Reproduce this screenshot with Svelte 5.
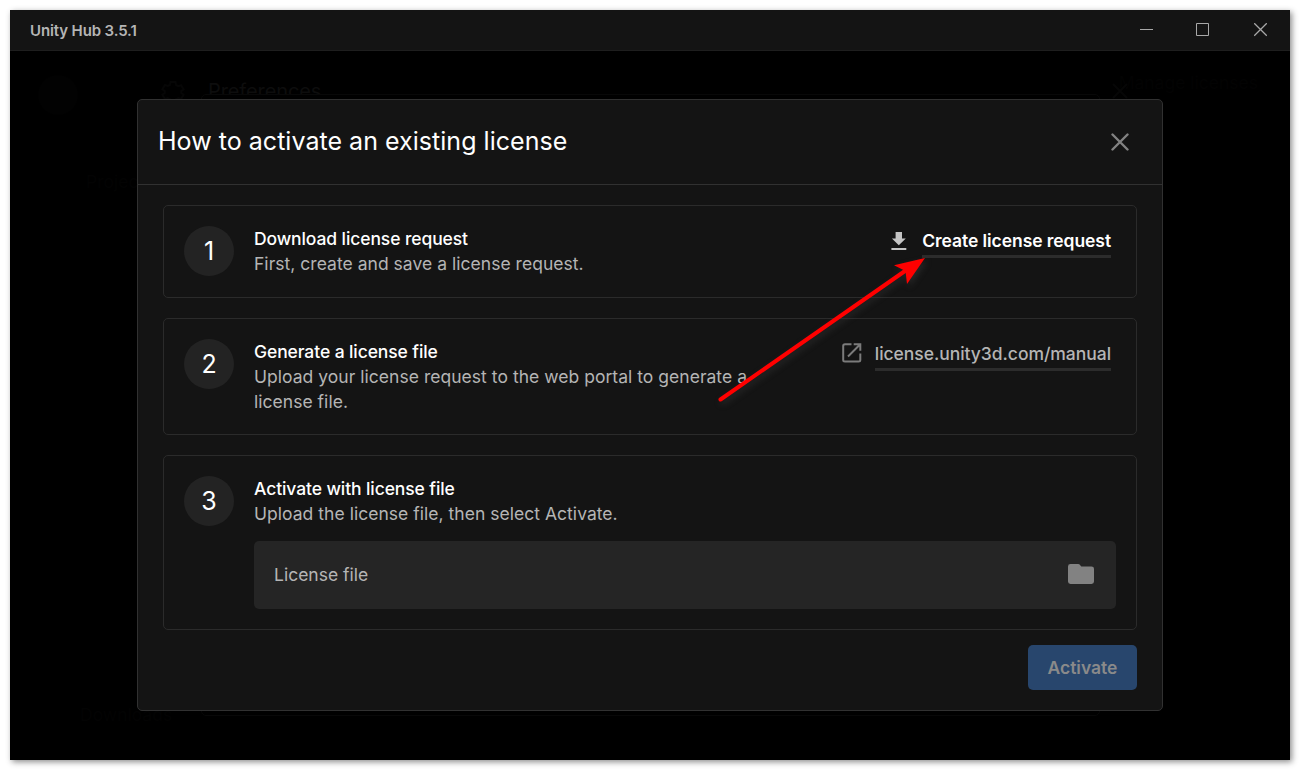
<script lang="ts">
  const version = '3.5.1';

  const steps = [
    {
      title: 'Download license request',
      text: 'First, create and save a license request.',
      link: 'Create license request',
      icon: 'download'
    },
    {
      title: 'Generate a license file',
      text: 'Upload your license request to the web portal to generate a license file.',
      link: 'license.unity3d.com/manual',
      icon: 'external'
    },
    {
      title: 'Activate with license file',
      text: 'Upload the license file, then select Activate.',
      link: '',
      icon: ''
    }
  ];
</script>

<div class="window">
  <header class="titlebar">
    <span class="app-name">Unity Hub {version}</span>
    <div class="window-controls">
      <svg width="13" height="14" viewBox="0 0 13 14"><path d="M0 6.500h13" /></svg>
      <svg width="13" height="14" viewBox="0 0 13 14"><path d="M.5 .5h12v12H.5z" /></svg>
      <svg class="wide" width="13" height="14" viewBox="0 0 13 14"><path d="M.2 .2l12.600 12.600M12.800 .2L.2 12.800" /></svg>
    </div>
  </header>

  <main class="content">
    <!-- dimmed screens under the dialog -->
    <div class="behind">
      <svg class="gear" width="24" height="24" viewBox="0 0 24 24">
        <path d="M9.500 2h5l.6 3 2.200 1.200 2.800-1 2.500 4.200L20.300 11v2l2.300 1.800-2.500 4.200-2.800-1-2.200 1.200-.6 3h-5l-.6-3-2.200-1.200-2.800 1-2.500-4.200L3.700 13v-2L1.400 9.200l2.500-4.200 2.800 1L8.900 5z" />
      </svg>
      <span class="prefs">Preferences</span>
      <span class="manage">Manage licenses</span>
      <span class="projects">Projects</span>
      <span class="downloads">Downloads</span>
      <svg class="prefs-close" width="16" height="16" viewBox="0 0 16 16"><path d="M1 1l14 14M15 1L1 15" /></svg>
      <div class="avatar"></div>
      <div class="behind-dialog"></div>
    </div>

    <section class="dialog">
      <div class="dialog-header">
        <h1>How to activate an existing license</h1>
        <button class="close" aria-label="Close">
          <svg width="18" height="18" viewBox="0 0 18 18"><path d="M1.500 1.500l15 15M16.500 1.500l-15 15" /></svg>
        </button>
      </div>

      <div class="dialog-body">
        {#each steps as step, i}
          <article class="step">
            <div class="number">{i + 1}</div>
            <div class="step-main">
              <div class="step-row">
                <div class="step-text">
                  <h2>{step.title}</h2>
                  <p>{step.text}</p>
                </div>
                {#if step.link}
                  <button class="link" class:primary={step.icon === 'download'}>
                    {#if step.icon === 'download'}
                      <svg width="16" height="19" viewBox="0 0 16 19">
                        <path d="M4.600 0h6.400v6.500h3.800L7.800 13.300.9 6.500h3.700zM.4 16h14.900v2H.4z" />
                      </svg>
                    {:else}
                      <svg width="20" height="20" viewBox="0 0 20 20" class="outline">
                        <path d="M9.500 1.200H3Q1.200 1.200 1.200 3v14q0 1.500 1.800 1.500h13.500q1.800 0 1.800-1.500v-6.500" />
                        <path d="M11.700 1.200h6.600v6.600M18 1.500L6 13.500" />
                      </svg>
                    {/if}
                    <span>{step.link}</span>
                  </button>
                {/if}
              </div>
              {#if i === 2}
                <div class="file-field">
                  <span>License file</span>
                  <svg width="26" height="20" viewBox="0 0 26 20">
                    <path d="M2.500 0h7.800q.8 0 1.300.6L13.300 2.400h10.200Q26 2.400 26 4.800v12.800q0 2.400-2.500 2.400h-21Q0 20 0 17.600V2.400Q0 0 2.500 0z" />
                  </svg>
                </div>
              {/if}
            </div>
          </article>
        {/each}
      </div>

      <div class="dialog-footer">
        <button class="activate">Activate</button>
      </div>
    </section>
  </main>

  <svg class="pointer" width="240" height="170" viewBox="0 0 240 170">
    <path class="shaft" d="M20.500 159.500L210 27.500" />
    <path class="head" d="M225 18L194 25.300L205.500 31L207 44z" />
  </svg>
</div>

<style>
  :global(body) {
    margin: 0;
    background: #fff;
    overflow: hidden;
  }

  .window {
    position: relative;
    box-sizing: border-box;
    display: flex;
    flex-direction: column;
    width: 1280px;
    height: 750px;
    margin: 10px;
    background: #000;
    box-shadow: 2px 2px 6px rgba(0, 0, 0, 0.45);
    font-family: Inter, 'Liberation Sans', sans-serif;
    font-size: 17.5px;
    line-height: 25px;
    color: #b5b5b5;
  }

  h1, h2, p {
    margin: 0;
    font-weight: 400;
  }

  button {
    padding: 0;
    border: 0;
    background: none;
    font: inherit;
    color: inherit;
  }

  svg {
    display: block;
  }

  .titlebar {
    box-sizing: border-box;
    display: flex;
    align-items: center;
    justify-content: space-between;
    height: 41px;
    padding: 0 23px 0 20px;
    background: #141414;
    border-bottom: 1px solid #1e1e1e;
  }

  .app-name {
    font-size: 15px;
    font-weight: 600;
    letter-spacing: -0.13px;
  }

  .window-controls {
    display: flex;
    gap: 43px;
    padding-bottom: 1px;
  }

  .window-controls svg {
    fill: none;
    stroke: #a8a8a8;
    stroke-width: 1;
  }

  .window-controls svg.wide {
    margin-left: 2px;
    stroke-width: 1.3;
  }

  .content {
    position: relative;
    flex: 1;
    padding: 48px 127px 49px;
  }

  .behind {
    position: absolute;
    inset: 0;
    color: #030303;
  }

  .behind > * {
    position: absolute;
  }

  .behind svg {
    fill: none;
    stroke: #060606;
    stroke-width: 2;
  }

  .gear {
    left: 151px;
    top: 29px;
  }

  .prefs {
    left: 198px;
    top: 28px;
    font-size: 20px;
    letter-spacing: -0.1px;
    color: #0d0d0d;
  }

  .manage {
    right: 32px;
    top: 19px;
  }

  .projects {
    left: 76px;
    top: 118px;
  }

  .downloads {
    left: 70px;
    top: 651px;
  }

  .prefs-close {
    left: 1102px;
    top: 32px;
  }

  .avatar {
    left: 28px;
    top: 24px;
    width: 40px;
    height: 40px;
    border-radius: 50%;
    background: #020202;
  }

  .behind-dialog {
    box-sizing: border-box;
    left: 191px;
    top: 43px;
    width: 899px;
    height: 622px;
    border: 1px solid #080808;
    border-radius: 5px;
    background: #000;
  }

  .dialog {
    position: relative;
    box-sizing: border-box;
    height: 612px;
    border: 1px solid #313131;
    border-radius: 5px;
    background: #141414;
  }

  .dialog-header {
    box-sizing: border-box;
    display: flex;
    align-items: center;
    justify-content: space-between;
    height: 85px;
    padding: 0 33px 0 20px;
    border-bottom: 1px solid #313131;
  }

  .dialog-header h1 {
    padding-bottom: 2px;
    font-size: 25px;
    line-height: 34px;
    letter-spacing: 0.03px;
    color: #fff;
  }

  .close svg {
    fill: none;
    stroke: #828282;
    stroke-width: 2.4;
    stroke-linecap: round;
  }

  .dialog-body {
    display: flex;
    flex-direction: column;
    gap: 20px;
    padding: 20px 25px 15px;
  }

  .step {
    box-sizing: border-box;
    display: flex;
    gap: 20px;
    min-height: 93px;
    padding: 20px;
    border: 1px solid #2b2b2b;
    border-radius: 5px;
  }

  .number {
    flex: none;
    width: 50px;
    height: 50px;
    border-radius: 50%;
    background: #232323;
    font-size: 25px;
    line-height: 50px;
    text-align: center;
    color: #fff;
  }

  .step-main {
    flex: 1;
  }

  .step-row {
    display: flex;
    justify-content: space-between;
  }

  .step-text {
    max-width: 510px;
    letter-spacing: 0.03px;
  }

  .step-text h2 {
    font-size: 17.5px;
    font-weight: 500;
    letter-spacing: -0.1px;
    color: #fff;
  }

  .link {
    display: flex;
    align-items: flex-start;
    align-self: flex-start;
    gap: 13px;
    margin-right: 5px;
    font-weight: 500;
    letter-spacing: -0.04px;
  }

  .link.primary {
    gap: 15px;
    font-weight: 600;
    letter-spacing: -0.07px;
    color: #fff;
  }

  .link span {
    height: 29px;
    line-height: 29px;
    border-bottom: 3px solid #2c2c2c;
  }

  .link svg {
    margin-top: 6px;
    fill: #c4c4c4;
  }

  .link svg.outline {
    margin-top: 4px;
    fill: none;
    stroke: #7b7b7b;
    stroke-width: 2;
  }

  .file-field {
    box-sizing: border-box;
    display: flex;
    align-items: center;
    justify-content: space-between;
    height: 68px;
    margin-top: 15px;
    padding: 0 22px 2px 20px;
    border-radius: 5px;
    background: #252525;
  }

  .file-field svg {
    fill: #828282;
  }

  .dialog-footer {
    display: flex;
    justify-content: flex-end;
    padding-right: 25px;
  }

  .activate {
    width: 109px;
    height: 45px;
    border-radius: 5px;
    background: #28466d;
    font-weight: 600;
    color: #8a8a8a;
  }

  .pointer {
    position: absolute;
    left: 690px;
    top: 230px;
    filter: drop-shadow(2px 3px 3px rgba(70, 70, 70, 0.4));
  }

  .shaft {
    stroke: #f00;
    stroke-width: 4;
    stroke-linecap: round;
  }

  .head {
    fill: #f00;
  }
</style>
